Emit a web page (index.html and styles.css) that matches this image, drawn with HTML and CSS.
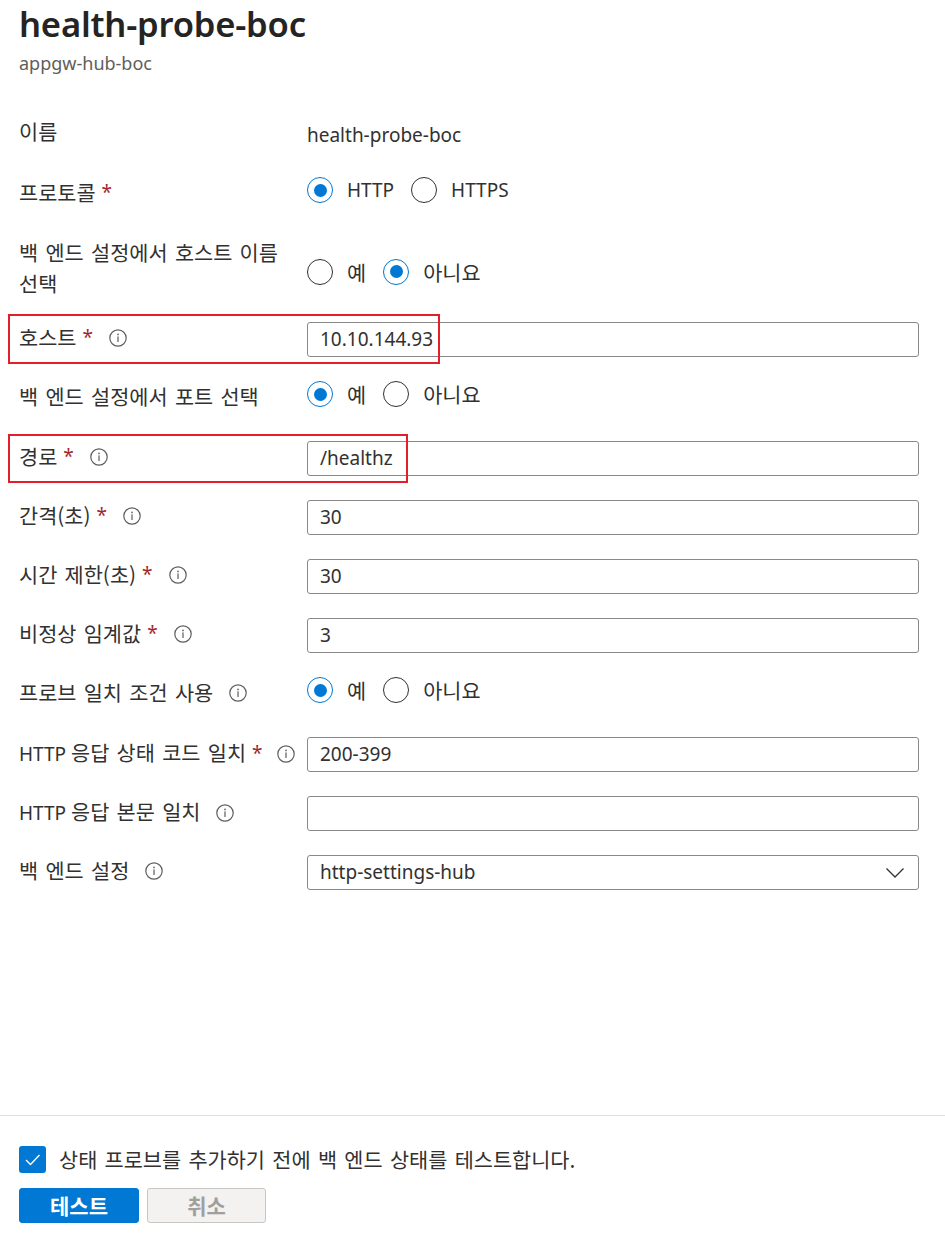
FILE: index.html
```html
<!DOCTYPE html>
<html lang="ko">
<head>
<meta charset="utf-8">
<title>health-probe-boc</title>
<link rel="stylesheet" href="styles.css">
</head>
<body>
<div class="page">
  <main class="main">
    <header class="head">
      <h1 class="title">health-probe-boc</h1>
      <div class="subtitle">appgw-hub-boc</div>
    </header>

    <div class="form">
      <div class="row row-name">
        <div class="label label-top"><span class="ko">이름</span></div>
        <div class="value">health-probe-boc</div>
      </div>

      <div class="row row-radio">
        <div class="label"><span class="ko">프로토콜</span><span class="req">*</span></div>
        <div class="radios">
          <span class="opt"><span class="radio on"></span>HTTP</span>
          <span class="opt"><span class="radio"></span>HTTPS</span>
        </div>
      </div>

      <div class="row">
        <div class="label wrap ko">백 엔드 설정에서 호스트 이름 선택</div>
        <div class="radios low">
          <span class="opt ko"><span class="radio"></span>예</span>
          <span class="opt ko"><span class="radio on"></span>아니요</span>
        </div>
      </div>

      <div class="row">
        <div class="mark mark-host"></div>
        <div class="label"><span class="ko">호스트</span><span class="req">*</span><span class="info"><svg viewBox="0 0 18 18" width="18" height="18"><circle cx="9" cy="9" r="8.2" fill="none" stroke="#605e5c" stroke-width="1.2"/><rect x="8.4" y="7.4" width="1.2" height="5.6" fill="#605e5c"/><circle cx="9" cy="5.4" r="0.85" fill="#605e5c"/></svg></span></div>
        <div class="input">10.10.144.93</div>
      </div>

      <div class="row row-radio">
        <div class="label"><span class="ko">백 엔드 설정에서 포트 선택</span></div>
        <div class="radios">
          <span class="opt ko"><span class="radio on"></span>예</span>
          <span class="opt ko"><span class="radio"></span>아니요</span>
        </div>
      </div>

      <div class="row">
        <div class="mark mark-path"></div>
        <div class="label"><span class="ko">경로</span><span class="req">*</span><span class="info"><svg viewBox="0 0 18 18" width="18" height="18"><circle cx="9" cy="9" r="8.2" fill="none" stroke="#605e5c" stroke-width="1.2"/><rect x="8.4" y="7.4" width="1.2" height="5.6" fill="#605e5c"/><circle cx="9" cy="5.4" r="0.85" fill="#605e5c"/></svg></span></div>
        <div class="input">/healthz</div>
      </div>

      <div class="row">
        <div class="label"><span class="ko">간격(초)</span><span class="req">*</span><span class="info"><svg viewBox="0 0 18 18" width="18" height="18"><circle cx="9" cy="9" r="8.2" fill="none" stroke="#605e5c" stroke-width="1.2"/><rect x="8.4" y="7.4" width="1.2" height="5.6" fill="#605e5c"/><circle cx="9" cy="5.4" r="0.85" fill="#605e5c"/></svg></span></div>
        <div class="input">30</div>
      </div>

      <div class="row">
        <div class="label"><span class="ko">시간 제한(초)</span><span class="req">*</span><span class="info"><svg viewBox="0 0 18 18" width="18" height="18"><circle cx="9" cy="9" r="8.2" fill="none" stroke="#605e5c" stroke-width="1.2"/><rect x="8.4" y="7.4" width="1.2" height="5.6" fill="#605e5c"/><circle cx="9" cy="5.4" r="0.85" fill="#605e5c"/></svg></span></div>
        <div class="input">30</div>
      </div>

      <div class="row">
        <div class="label"><span class="ko">비정상 임계값</span><span class="req">*</span><span class="info"><svg viewBox="0 0 18 18" width="18" height="18"><circle cx="9" cy="9" r="8.2" fill="none" stroke="#605e5c" stroke-width="1.2"/><rect x="8.4" y="7.4" width="1.2" height="5.6" fill="#605e5c"/><circle cx="9" cy="5.4" r="0.85" fill="#605e5c"/></svg></span></div>
        <div class="input">3</div>
      </div>

      <div class="row row-radio">
        <div class="label"><span class="ko">프로브 일치 조건 사용</span><span class="info"><svg viewBox="0 0 18 18" width="18" height="18"><circle cx="9" cy="9" r="8.2" fill="none" stroke="#605e5c" stroke-width="1.2"/><rect x="8.4" y="7.4" width="1.2" height="5.6" fill="#605e5c"/><circle cx="9" cy="5.4" r="0.85" fill="#605e5c"/></svg></span></div>
        <div class="radios">
          <span class="opt ko"><span class="radio on"></span>예</span>
          <span class="opt ko"><span class="radio"></span>아니요</span>
        </div>
      </div>

      <div class="row">
        <div class="label"><span>HTTP <span class="ko">응답 상태 코드 일치</span></span><span class="req">*</span><span class="info info-tight"><svg viewBox="0 0 18 18" width="18" height="18"><circle cx="9" cy="9" r="8.2" fill="none" stroke="#605e5c" stroke-width="1.2"/><rect x="8.4" y="7.4" width="1.2" height="5.6" fill="#605e5c"/><circle cx="9" cy="5.4" r="0.85" fill="#605e5c"/></svg></span></div>
        <div class="input">200-399</div>
      </div>

      <div class="row">
        <div class="label"><span>HTTP <span class="ko">응답 본문 일치</span></span><span class="info"><svg viewBox="0 0 18 18" width="18" height="18"><circle cx="9" cy="9" r="8.2" fill="none" stroke="#605e5c" stroke-width="1.2"/><rect x="8.4" y="7.4" width="1.2" height="5.6" fill="#605e5c"/><circle cx="9" cy="5.4" r="0.85" fill="#605e5c"/></svg></span></div>
        <div class="input"></div>
      </div>

      <div class="row">
        <div class="label"><span class="ko">백 엔드 설정</span><span class="info"><svg viewBox="0 0 18 18" width="18" height="18"><circle cx="9" cy="9" r="8.2" fill="none" stroke="#605e5c" stroke-width="1.2"/><rect x="8.4" y="7.4" width="1.2" height="5.6" fill="#605e5c"/><circle cx="9" cy="5.4" r="0.85" fill="#605e5c"/></svg></span></div>
        <div class="input select"><span>http-settings-hub</span><svg class="chev" viewBox="0 0 18 10" width="18" height="10"><path d="M0.5 0.5 L9 9 L17.5 0.5" fill="none" stroke="#323130" stroke-width="1.3"/></svg></div>
      </div>
    </div>
  </main>

  <footer class="footer">
    <div class="check-row">
      <span class="checkbox"><svg viewBox="0 0 27 27" width="27" height="27"><path d="M7 14 L11.5 18.5 L20.5 9" fill="none" stroke="#fff" stroke-width="1.4"/></svg></span>
      <span class="check-text ko">상태 프로브를 추가하기 전에 백 엔드 상태를 테스트합니다.</span>
    </div>
    <div class="buttons">
      <button class="btn primary">테스트</button>
      <button class="btn disabled">취소</button>
    </div>
  </footer>
</div>
</body>
</html>
```

FILE: styles.css
```css
* { box-sizing: border-box; }

html, body {
  margin: 0;
  padding: 0;
  background: #ffffff;
}

body {
  font-family: "Noto Sans", "Noto Sans CJK KR", sans-serif;
  color: #323130;
  font-size: 19px;
}

.ko {
  font-family: "Noto Sans CJK KR", "Noto Sans", sans-serif;
  font-size: 20.8px;
  word-spacing: 1.5px;
}

.page {
  min-height: 1234px;
  display: flex;
  flex-direction: column;
}

.main {
  padding: 2px 26px 0 19px;
}

.title {
  margin: 0;
  font-size: 34.6px;
  font-weight: 600;
  line-height: 44px;
  color: #252423;
  letter-spacing: -0.2px;
}

.subtitle {
  margin-top: 5px;
  font-size: 18px;
  line-height: 24px;
  color: #605e5c;
}

.form {
  margin-top: 43px;
  display: flex;
  flex-direction: column;
  gap: 24px;
}

.row {
  position: relative;
  display: grid;
  grid-template-columns: 288px 1fr;
  align-items: start;
  min-height: 35px;
}

.row-name {
  min-height: 34px;
}

.row-radio {
  min-height: 36px;
}

.label {
  line-height: 31px;
  display: flex;
  align-items: center;
  white-space: nowrap;
}

.label-top {
  line-height: 26px;
}

.label.wrap {
  display: block;
  white-space: normal;
  line-height: 30.5px;
  padding-right: 6px;
}

.req {
  color: #a4262c;
  margin-left: 6px;
  font-size: 19px;
}

.info {
  display: inline-flex;
  margin-left: 16px;
}

.info-tight {
  margin-left: 14px;
}

.value {
  line-height: 35px;
}

.radios {
  display: flex;
  align-items: center;
  height: 26px;
  gap: 17px;
}

.radios.low {
  align-self: center;
  margin-top: 8px;
}

.opt {
  display: inline-flex;
  align-items: center;
  gap: 14px;
  line-height: 26px;
}

.radio {
  width: 26px;
  height: 26px;
  border-radius: 50%;
  border: 1px solid #323130;
  display: inline-flex;
  align-items: center;
  justify-content: center;
  flex: none;
}

.radio.on {
  border-color: #0078d4;
}

.radio.on::after {
  content: "";
  width: 13px;
  height: 13px;
  border-radius: 50%;
  background: #0078d4;
}

.input {
  height: 35px;
  border: 1px solid #8a8886;
  border-radius: 3px;
  padding: 0 12px;
  line-height: 33px;
  color: #323130;
}

.select {
  display: flex;
  align-items: center;
  justify-content: space-between;
  padding-right: 14px;
}

.chev {
  display: block;
}

.mark {
  position: absolute;
  border: 2px solid #e3202a;
  pointer-events: none;
}

.mark-host {
  left: -11px;
  top: -8px;
  width: 432px;
  height: 50px;
}

.mark-path {
  left: -11px;
  top: -7px;
  width: 400px;
  height: 49px;
}

.footer {
  margin-top: auto;
  border-top: 1px solid #e1dfdd;
  padding: 30px 19px 11px 19px;
}

.check-row {
  display: flex;
  align-items: center;
  height: 27px;
}

.checkbox {
  width: 27px;
  height: 27px;
  border-radius: 3px;
  background: #0078d4;
  display: inline-flex;
  flex: none;
}

.check-text {
  margin-left: 13px;
  line-height: 27px;
}

.buttons {
  margin-top: 15px;
  display: flex;
  gap: 8px;
}

.btn {
  height: 35px;
  width: 120px;
  border-radius: 3px;
  font-family: "Noto Sans CJK KR", "Noto Sans", sans-serif;
  font-size: 21px;
  font-weight: 700;
  padding: 0;
  line-height: 33px;
}

.btn.primary {
  background: #0078d4;
  border: 1px solid #0078d4;
  color: #ffffff;
}

.btn.disabled {
  width: 119px;
  background: #f3f2f1;
  border: 1px solid #c8c6c4;
  color: #a19f9d;
}
```
